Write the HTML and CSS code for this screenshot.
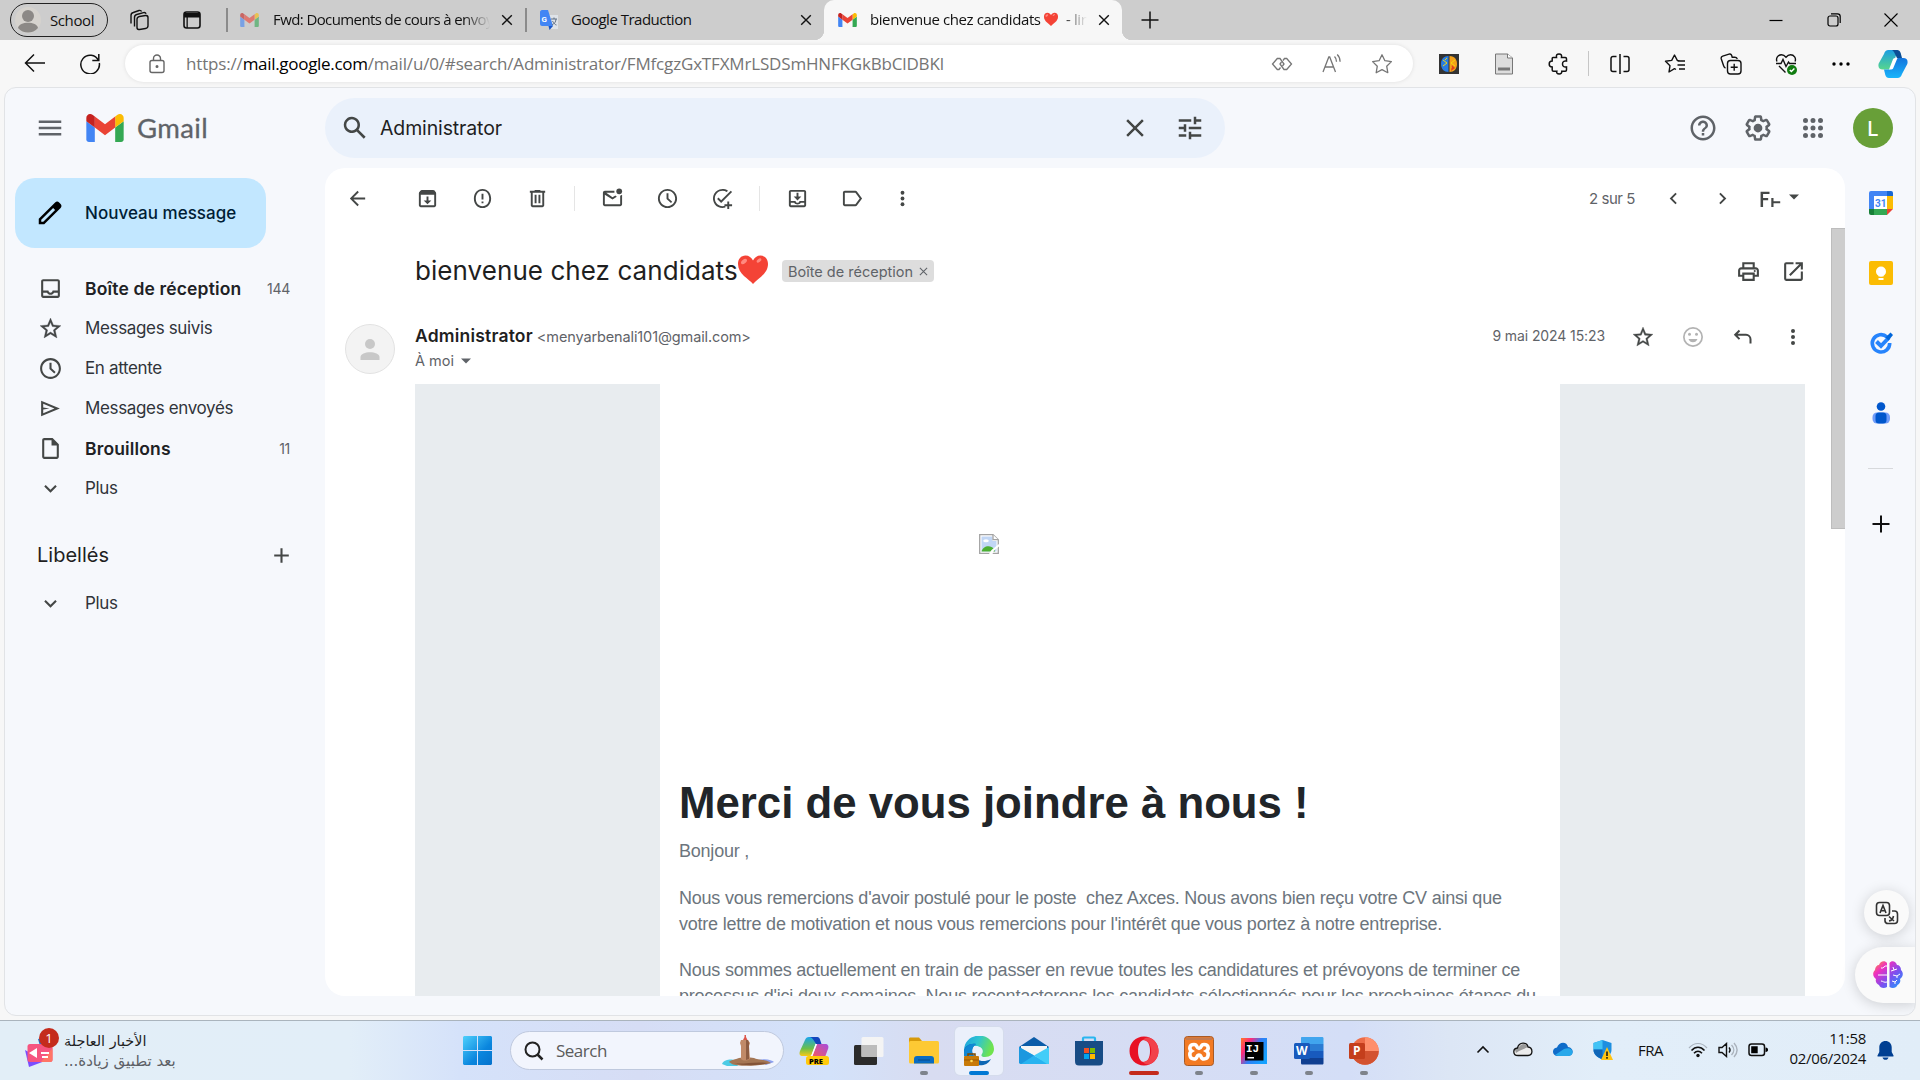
FILE: index.html
```html
<!DOCTYPE html>
<html lang="fr">
<head>
<meta charset="utf-8">
<title>bienvenue chez candidats - Gmail</title>
<link rel="stylesheet" href="styles.css">
</head>
<body>
<svg class="defs" width="0" height="0">
  <symbol id="gmail" viewBox="52 42 88 66"><path fill="#4285f4" d="M58 108h14V74L52 59v43c0 3.32 2.69 6 6 6"/><path fill="#34a853" d="M120 108h14c3.32 0 6-2.69 6-6V59l-20 15"/><path fill="#fbbc04" d="M120 48v26l20-15v-8c0-7.42-8.47-11.65-14.4-7.2"/><path fill="#ea4335" d="M72 74V48l24 18 24-18v26L96 92"/><path fill="#c5221f" d="M52 51v8l20 15V48l-5.6-4.2c-5.94-4.45-14.4-.22-14.4 7.2"/></symbol>
  <symbol id="close" viewBox="0 0 12 12"><path d="M1.2 1.2l9.6 9.6M10.8 1.2l-9.6 9.6" fill="none" stroke="currentColor" stroke-width="1.4"/></symbol>
  <symbol id="heart" viewBox="0 0 32 32"><path fill="#f44336" d="M16 30C12 25 1 20 1 10 1 5 4 1.500 8.500 1.500c3.500 0 6 2 7.500 5 1.500-3 4-5 7.500-5C28 1.500 31 5 31 10c0 10-11 15-15 20z"/><ellipse cx="7" cy="7.500" rx="3.400" ry="2" fill="#ff8a80" transform="rotate(-40 7 7.500)"/><ellipse cx="22" cy="6.500" rx="2.800" ry="1.500" fill="#ff8a80" transform="rotate(-35 22 6.500)"/></symbol>
  <symbol id="star" viewBox="0 0 24 24"><path d="M22 9.240l-7.190-.62L12 2 9.190 8.630 2 9.240l5.460 4.730L5.820 21 12 17.270 18.180 21l-1.630-7.030L22 9.240zM12 15.400l-3.760 2.270 1-4.280-3.320-2.880 4.380-.38L12 6.100l1.710 4.040 4.380.38-3.320 2.880 1 4.280L12 15.400z" stroke="currentColor" stroke-width=".3"/></symbol>
  <symbol id="clock" viewBox="0 0 24 24"><path d="M12 2C6.500 2 2 6.500 2 12s4.500 10 10 10 10-4.500 10-10S17.500 2 12 2zm0 18c-4.400 0-8-3.600-8-8s3.600-8 8-8 8 3.600 8 8-3.600 8-8 8zM13 6.500h-2v6l4.600 4.300 1.300-1.400-3.900-3.700z"/></symbol>
  <symbol id="dots" viewBox="0 0 24 24"><circle cx="12" cy="6" r="2"/><circle cx="12" cy="12" r="2"/><circle cx="12" cy="18" r="2"/></symbol>
  <symbol id="down" viewBox="0 0 24 24"><path d="M7.400 8.600L12 13.200l4.600-4.600L18 10l-6 6-6-6z"/></symbol>
</svg>

<header class="tabstrip">
  <div class="profile"><svg width="26" height="26" viewBox="0 0 26 26"><circle cx="13" cy="13" r="13" fill="#d6d3ce"/><circle cx="13" cy="9" r="6" fill="#8c8986"/><path d="M3 21c1-7 19-7 20 0-5 6-15 6-20 0z" fill="#8c8986"/></svg><span>School</span></div>
  <svg class="workspaces" width="22" height="22" viewBox="0 0 22 22" fill="none" stroke="#111" stroke-width="1.400"><rect x="9" y="7" width="11" height="13" rx="2.500" transform="skewY(-9) translate(0 2.300)"/><path d="M6.500 17.500V8.500c0-1.600.8-2.600 2.300-3L15.500 3.600c1.200-.3 2.200.2 2.600 1.200"/><path d="M3 14.500V6.500c0-1.600.8-2.600 2.300-3L11 1.500c1.200-.3 2.200.2 2.600 1"/></svg>
  <svg class="tabactions" width="20" height="20" viewBox="0 0 20 20"><rect x="2" y="2" width="16" height="16" rx="2.500" fill="none" stroke="#111" stroke-width="1.600"/><path d="M2 3h16v4.500H2zM4.500 7h1.300v11H4.500z" fill="#111"/></svg>
  <div class="tab tab-one"><svg class="fav faded" width="19" height="14"><use href="#gmail"/></svg><span class="title t1">Fwd: Documents de cours à envoyer</span><svg class="x" width="12" height="12"><use href="#close"/></svg></div>
  <div class="tab tab-two"><svg class="fav" width="19" height="20" viewBox="0 0 19 20"><path d="M7 5h11v14H11z" fill="#dfe3e8"/><path d="M0 2C0 1 1 0 2 0h6l5 16H2c-1 0-2-1-2-2z" fill="#4285f4"/><path d="M8.500 16h4.500l-3.500 4z" fill="#1a57c8"/><text x="1.500" y="11.500" class="g-letter">G</text><path d="M11 9h6M14 7.500V9M16 9c0 3-2 5-4 6M12.500 11c1 2 3 4 4 4" stroke="#5f6f84" stroke-width="1" fill="none"/></svg><span class="title t2">Google Traduction</span><svg class="x" width="12" height="12"><use href="#close"/></svg></div>
  <div class="tab active"><svg class="fav" width="19" height="14"><use href="#gmail"/></svg><span class="title t3">bienvenue chez candidats<svg class="tab-heart" width="16" height="15"><use href="#heart"/></svg> - linda</span><svg class="x" width="12" height="12"><use href="#close"/></svg></div>
  <svg class="newtab" width="18" height="18" viewBox="0 0 18 18"><path d="M9 .5v17M.5 9h17" stroke="#111" stroke-width="1.500"/></svg>
  <div class="winctl">
    <svg width="14" height="14" viewBox="0 0 14 14"><path d="M.5 7.500h13" stroke="#000" stroke-width="1.200"/></svg>
    <svg width="14" height="14" viewBox="0 0 14 14" fill="none" stroke="#000" stroke-width="1.200"><rect x="1" y="3" width="10" height="10" rx="2"/><path d="M4 .8h6.500c1.600 0 2.700 1 2.700 2.700V10"/></svg>
    <svg width="14" height="14" viewBox="0 0 14 14"><path d="M.5.5l13 13M13.500.5l-13 13" stroke="#000" stroke-width="1.100"/></svg>
  </div>
</header>

<nav class="toolbar">
  <svg class="nav-ic" width="22" height="20" viewBox="0 0 22 20" fill="none" stroke="#111" stroke-width="1.500"><path d="M10 1.500L1.500 10l8.500 8.500M1.500 10h19.500"/></svg>
  <svg class="nav-ic" width="22" height="22" viewBox="0 0 22 22" fill="none" stroke="#111" stroke-width="1.500"><path d="M19.500 8.500A9.300 9.300 0 1 0 20.300 11M19.800 2v6.500h-6.500"/></svg>
  <div class="address">
    <svg class="lock" width="18" height="20" viewBox="0 0 18 20" fill="none" stroke="#666" stroke-width="1.400"><rect x="2" y="6.500" width="14" height="12" rx="2"/><path d="M5.500 6.500V4.500a3.500 3.500 0 0 1 7 0v2"/><circle cx="9" cy="12.500" r=".8" fill="#444"/></svg>
    <span class="url">https://<b>mail.google.com</b>/mail/u/0/#search/Administrator/FMfcgzGxTFXMrLSDSmHNFKGkBbClDBKl</span>
    <div class="addr-icons">
      <svg width="22" height="22" viewBox="0 0 22 22" fill="none" stroke="#767676" stroke-width="1.300"><path d="M9.500 14.500L8 16.500H6.300L1.500 11l4.800-5.500H9L13 11l-1.500 2"/><path d="M12 7.500l1.500-2h2.200l4.800 5.500-4.800 5.500H13L9 11l1.500-2"/></svg>
      <svg width="22" height="22" viewBox="0 0 22 22" fill="none" stroke="#767676" stroke-width="1.300"><path d="M2 19L7.800 4h.9L14.500 19M4 14h8.500M13.500 3.500c1.400 1.300 2 3 2 5.200M16.200 1.500c2 1.900 2.900 4.300 2.900 7.200"/></svg>
      <svg width="22" height="22" viewBox="0 0 22 22" fill="none" stroke="#767676" stroke-width="1.300"><path d="M11 1.800l2.900 5.900 6.500.9-4.700 4.600 1.100 6.500-5.800-3.100-5.800 3.100 1.100-6.500L1.600 8.600l6.500-.9z" stroke-linejoin="round"/></svg>
    </div>
  </div>
  <div class="tools">
    <svg width="22" height="22" viewBox="0 0 22 22"><path fill="#333" d="M1 1h20v20H1z"/><path d="M10.500 3C5 3 3 7 3 11c0 5 3 8 7.500 8z" fill="#2a7de1"/><path d="M11.500 3C17 3 19 7 19 11c0 5-3 8-7.500 8z" fill="#f3a11a"/><path d="M5 7l4 3-4 3M9 5l-2 2M17 7l-4 3 4 3M13 14l2 2" stroke="#f5d90a" fill="none"/><path d="M14 12l3 3-4 3z" fill="#e0401d"/></svg>
    <svg width="22" height="22" viewBox="0 0 22 22"><path d="M2.500 1h12l5 4v16h-17z" fill="#ddd" stroke="#777"/><path d="M14.500 1v4h5" fill="#fff" stroke="#777"/><path d="M5 14.500h12v3H5z" fill="#777"/></svg>
    <svg width="22" height="22" viewBox="0 0 22 22" fill="none" stroke="#111" stroke-width="1.500"><path d="M5 4.500h3.500C8 2 9 1 11 1s3 1 2.500 3.500h3.800c.7 0 1.200.5 1.200 1.200V8c-2.500-.5-4 .8-4 3s1.500 3.500 4 3v3c0 .7-.5 1.200-1.200 1.200h-3.500C14 20 13 21 11.200 21c-1.900 0-3-1-2.400-2.800H5.500c-.8 0-1.300-.5-1.300-1.200v-3C2 14 1.200 12.800 1.200 11S2 8 4.200 8V5.500c0-.6.300-1 .8-1z"/></svg>
    <i class="tools-sep"></i>
    <svg width="22" height="22" viewBox="0 0 22 22" fill="none" stroke="#111" stroke-width="1.500"><path d="M11 1v20M7.500 3.500H4A2 2 0 0 0 2 5.500v11a2 2 0 0 0 2 2h3.500M14.500 3.500H18a2 2 0 0 1 2 2v11a2 2 0 0 1-2 2h-3.500"/></svg>
    <svg width="22" height="22" viewBox="0 0 22 22" fill="none" stroke="#111" stroke-width="1.400"><path d="M12 16.500l-1.500-.8L5 19l1-6.300L1.500 8.300l6.200-.9L10.500 2l2.800 5.400 2 .3M13.500 8h7.500M13.500 12h7.500M15 16h6" stroke-linejoin="round"/></svg>
    <svg width="22" height="22" viewBox="0 0 22 22" fill="none" stroke="#111" stroke-width="1.400"><rect x="7.500" y="7.500" width="13.500" height="13.500" rx="3"/><path d="M14.200 10.800v7M10.700 14.300h7M5.500 15c-1-.3-1.500-1-1.800-2L1.300 6c-.4-1.300.2-2.400 1.400-2.800L9 1.200c1.200-.4 2.300.1 2.700 1.300l.5 1.800h2.600c1.200 0 2 .5 2.600 1.500"/></svg>
    <svg width="22" height="22" viewBox="0 0 22 22" fill="none" stroke="#111" stroke-width="1.400"><path d="M2 8.500C.5 5 3 1.800 6.500 1.800c2 0 3.300 1 4.500 2.400 1.200-1.400 2.500-2.400 4.500-2.400C19 1.800 21.500 5 20 8.500M1 10.500h5l2-4 3 7 2.500-4.500 1 1.500H21M4 13l6.500 6.500"/><circle cx="17" cy="17" r="5" fill="#107c10" stroke="none"/><path d="M14.800 17l1.600 1.600 3-3" stroke="#fff"/></svg>
    <svg width="22" height="22" viewBox="0 0 22 22"><circle cx="4" cy="11" r="1.700"/><circle cx="11" cy="11" r="1.700"/><circle cx="18" cy="11" r="1.700"/></svg>
    <svg class="copilot" width="30" height="28" viewBox="0 0 30 28"><defs><linearGradient id="cp1" x1="0" y1="0" x2="0" y2="1"><stop offset="0" stop-color="#1b9de2"/><stop offset="1" stop-color="#57d68d"/></linearGradient><linearGradient id="cp2" x1="0" y1="0" x2="0" y2="1"><stop offset="0" stop-color="#1374dd"/><stop offset="1" stop-color="#19b5fb"/></linearGradient></defs><path d="M6 4c.8-2.500 2.200-4 4.500-4H20l-5 14c-1 3.500-2 5.500-5 5.500H5c-4 0-5.200-2.500-4.300-6z" fill="url(#cp1)"/><path d="M14 0h5c2 0 3 1 3.700 3L24 8h-5l-2-4c-.7-2-1.500-3-3-4z" fill="#0b4e96"/><path d="M24 24c-.8 2.500-2.200 4-4.500 4H11c-2 0-3-1-3.700-3L6 19.500h4.500c2 0 3-1 3.500-3l2-5.500c1-2 2-3 4-3H25c4 0 5.200 2.500 4.300 6z" fill="url(#cp2)"/><path d="M19.500 8H17c-1.200 0-2 .8-2.300 2l-3.700 9.500h2.200c1.200 0 2-.8 2.300-2z" fill="#fff"/></svg>
  </div>
</nav>

<main class="viewport">
<div class="page">
  <header class="ghead">
    <div class="brand">
      <svg width="30" height="30" viewBox="0 0 24 24" fill="#5f6368"><path d="M3 18h18v-2H3v2zm0-5h18v-2H3v2zm0-7v2h18V6H3z"/></svg>
      <svg class="glogo" width="38" height="28"><use href="#gmail"/></svg>
      <span class="gword">Gmail</span>
    </div>
    <div class="search">
      <svg width="30" height="30" viewBox="0 0 24 24"><path d="M20.500 19l-5.700-5.700A6.500 6.500 0 1 0 13.300 14.800L19 20.500zM9.500 14A4.500 4.500 0 1 1 14 9.500 4.500 4.500 0 0 1 9.500 14z"/></svg>
      <span>Administrator</span>
      <svg width="30" height="30" viewBox="0 0 24 24"><path d="M19 6.400L17.600 5 12 10.600 6.400 5 5 6.400l5.600 5.600L5 17.600 6.400 19l5.600-5.600 5.600 5.600 1.400-1.400-5.600-5.600z"/></svg>
      <svg width="30" height="30" viewBox="0 0 24 24"><path d="M3 17v2h6v-2H3zM3 5v2h10V5H3zm10 16v-2h8v-2h-8v-2h-2v6h2zM7 9v2H3v2h4v2h2V9H7zm14 4v-2H11v2h10zm-6-4h2V7h4V5h-4V3h-2v6z"/></svg>
    </div>
    <div class="ghead-right">
      <svg width="30" height="30" viewBox="0 0 24 24"><path d="M11 18h2v-2h-2v2zm1-16C6.480 2 2 6.480 2 12s4.480 10 10 10 10-4.480 10-10S17.520 2 12 2zm0 18c-4.410 0-8-3.590-8-8s3.590-8 8-8 8 3.590 8 8-3.590 8-8 8zm0-14c-2.210 0-4 1.790-4 4h2c0-1.100.9-2 2-2s2 .9 2 2c0 2-3 1.750-3 5h2c0-2.250 3-2.500 3-5 0-2.210-1.790-4-4-4z"/></svg>
      <svg width="30" height="30" viewBox="0 0 24 24"><path d="M13.850 22.250h-3.700c-.74 0-1.360-.54-1.450-1.270l-.27-1.890c-.27-.14-.53-.29-.79-.46l-1.800.72c-.7.26-1.470-.03-1.810-.65L2.200 15.530c-.35-.66-.2-1.440.36-1.880l1.530-1.190c-.01-.15-.02-.3-.02-.46 0-.15.010-.31.020-.46l-1.520-1.190c-.59-.45-.74-1.260-.37-1.880l1.850-3.190c.34-.62 1.110-.9 1.790-.63l1.810.73c.26-.17.52-.32.78-.46l.27-1.910c.09-.7.71-1.250 1.440-1.250h3.700c.74 0 1.360.54 1.450 1.270l.27 1.890c.27.14.53.29.79.46l1.800-.72c.71-.26 1.480.03 1.820.65l1.840 3.180c.36.66.2 1.440-.36 1.880l-1.520 1.190c.01.15.02.3.02.46s-.01.31-.02.46l1.520 1.190c.56.45.72 1.230.37 1.860l-1.860 3.220c-.34.62-1.110.9-1.800.63l-1.800-.72c-.26.17-.52.32-.78.46l-.27 1.910c-.1.680-.72 1.220-1.460 1.220zm-3.230-2h2.760l.37-2.550.53-.22c.44-.18.88-.44 1.340-.78l.45-.34 2.380.96 1.380-2.400-2.030-1.580.07-.56c.03-.26.060-.51.060-.78s-.03-.53-.06-.78l-.07-.56 2.030-1.580-1.390-2.400-2.390.96-.45-.35c-.42-.32-.87-.58-1.330-.77l-.52-.22-.37-2.550h-2.760l-.37 2.550-.53.210c-.44.190-.88.440-1.340.79l-.45.330-2.380-.95-1.390 2.390 2.030 1.580-.07.56a7 7 0 0 0-.06.790c0 .26.020.53.060.78l.07.56-2.030 1.580 1.380 2.400 2.390-.96.45.350c.43.330.86.580 1.330.77l.53.220z"/><circle cx="12" cy="12" r="3.500"/></svg>
      <svg width="30" height="30" viewBox="0 0 24 24"><path d="M6 8a2 2 0 1 0 0-4 2 2 0 0 0 0 4zM12 8a2 2 0 1 0 0-4 2 2 0 0 0 0 4zM18 8a2 2 0 1 0 0-4 2 2 0 0 0 0 4zM6 14a2 2 0 1 0 0-4 2 2 0 0 0 0 4zM12 14a2 2 0 1 0 0-4 2 2 0 0 0 0 4zM18 14a2 2 0 1 0 0-4 2 2 0 0 0 0 4zM6 20a2 2 0 1 0 0-4 2 2 0 0 0 0 4zM12 20a2 2 0 1 0 0-4 2 2 0 0 0 0 4zM18 20a2 2 0 1 0 0-4 2 2 0 0 0 0 4z"/></svg>
      <span class="me">L</span>
    </div>
  </header>

  <aside class="side">
    <div class="compose"><svg width="30" height="30" viewBox="0 0 24 24"><path d="M20.500 4.700l-1.200-1.200c-.9-.9-2.300-.9-3.200 0L3 16.600V21h4.400L20.500 7.900c.9-.9.900-2.300 0-3.200zM6.600 19H5v-1.600L14.500 8l1.600 1.600z"/></svg><span>Nouveau message</span></div>
    <ul class="nav">
      <li class="strong"><svg viewBox="0 0 24 24"><path d="M19 3H5c-1.100 0-2 .9-2 2v14c0 1.100.9 2 2 2h14c1.100 0 2-.9 2-2V5c0-1.100-.9-2-2-2zm0 16H5v-3h3.560c.69 1.190 1.970 2 3.450 2s2.750-.81 3.450-2H19v3zm0-5h-4.990c0 1.100-.9 2-2 2s-2-.9-2-2H5V5h14v9z"/></svg><span>Boîte de réception</span><em>144</em></li>
      <li><svg><use href="#star"/></svg><span>Messages suivis</span></li>
      <li><svg><use href="#clock"/></svg><span>En attente</span></li>
      <li><svg viewBox="0 0 24 24"><path d="M3 4.500v15L21 12 3 4.500zM5 7.500L15.800 12 5 16.500V13l6-1-6-1z"/></svg><span>Messages envoyés</span></li>
      <li class="strong"><svg viewBox="0 0 24 24"><path d="M14 2H6c-1.100 0-2 .9-2 2v16c0 1.100.9 2 2 2h12c1.100 0 2-.9 2-2V8l-6-6zm4 18H6V4h7v5h5v11z"/></svg><span>Brouillons</span><em>11</em></li>
      <li><svg><use href="#down"/></svg><span>Plus</span></li>
    </ul>
    <div class="labels"><span>Libellés</span><svg width="25" height="25" viewBox="0 0 24 24"><path d="M19 13h-6v6h-2v-6H5v-2h6V5h2v6h6z"/></svg></div>
    <ul class="nav"><li><svg><use href="#down"/></svg><span>Plus</span></li></ul>
  </aside>

  <section class="mail">
    <div class="actions">
      <svg class="back" viewBox="0 0 24 24"><path d="M20 11H7.800l5.600-5.600L12 4l-8 8 8 8 1.400-1.400L7.800 13H20z"/></svg>
      <svg viewBox="0 0 24 24"><path d="M20.500 5.200l-1.400-1.700C18.900 3.200 18.500 3 18 3H6c-.5 0-.9.200-1.100.6L3.500 5.200C3.200 5.600 3 6 3 6.500V19c0 1.100.9 2 2 2h14c1.100 0 2-.9 2-2V6.500c0-.5-.2-.9-.5-1.300zM19 19H5V8h14v11zm-8-9v4H8l4 4 4-4h-3v-4z"/></svg>
      <svg viewBox="0 0 24 24"><path d="M12 2C6.500 2 3 6.500 3 12s3.500 10 9 10 9-4.500 9-10-3.500-10-9-10zm0 18c-4.400 0-7-3.600-7-8s2.600-8 7-8 7 3.600 7 8-2.600 8-7 8zM11 7h2v6h-2zm0 8h2v2h-2z"/></svg>
      <svg viewBox="0 0 24 24"><path d="M15 4V3H9v1H4v2h1v13c0 1.100.9 2 2 2h10c1.100 0 2-.9 2-2V6h1V4h-5zm2 15H7V6h10v13zM9 8h2v9H9zm4 0h2v9h-2z"/></svg>
      <i></i>
      <svg viewBox="0 0 24 24"><path d="M20 9v9H4V8l8 5 4.500-2.800-1.500-1.400-3 2L5.500 6H14V4H4c-1.100 0-2 .9-2 2v12c0 1.100.9 2 2 2h16c1.100 0 2-.9 2-2V8z"/><circle cx="19" cy="4.500" r="3"/></svg>
      <svg><use href="#clock"/></svg>
      <svg viewBox="0 0 24 24"><path d="M22 5.200L10.600 16.600l-4.200-4.200 1.400-1.400 2.800 2.800L20.600 3.800zM12 20c-4.400 0-8-3.600-8-8s3.600-8 8-8c1.600 0 3 .5 4.300 1.300l1.500-1.500A10 10 0 1 0 12 22c1 0 2-.2 3-.5v-2.100c-.9.400-1.900.6-3 .6zm7-5h-2v3h-3v2h3v3h2v-3h3v-2h-3z"/></svg>
      <i></i>
      <svg viewBox="0 0 24 24"><path d="M19 3H5c-1.100 0-2 .9-2 2v14c0 1.100.9 2 2 2h14c1.100 0 2-.9 2-2V5c0-1.100-.9-2-2-2zm0 16H5v-2.500h3.500c.7 1.100 2 1.800 3.500 1.800s2.800-.7 3.500-1.800H19zm0-4.500h-5c0 1.100-.9 2-2 2s-2-.9-2-2H5V5h14zM16 10h-3V6h-2v4H8l4 4z"/></svg>
      <svg viewBox="0 0 24 24"><path d="M15 4H4c-1.100 0-2 .9-2 2v12c0 1.100.9 2 2 2h11c.7 0 1.300-.3 1.600-.8L22 12l-5.400-7.200C16.300 4.300 15.700 4 15 4zm0 14H4V6h11l4.500 6z"/></svg>
      <svg class="more"><use href="#dots"/></svg>
      <span class="count">2 sur 5</span>
      <svg viewBox="0 0 24 24"><path d="M15.400 7.400L14 6l-6 6 6 6 1.400-1.400L10.800 12z"/></svg>
      <svg viewBox="0 0 24 24"><path d="M10 6L8.600 7.400l4.600 4.600-4.600 4.600L10 18l6-6z"/></svg>
      <svg class="lang" viewBox="0 0 28 22"><path d="M4 4h10v2.500H6.800V11h5.700v2.500H6.800V21H4zM16 11h2.500v3.500H26V17h-7.500v4H16z"/></svg>
      <svg class="caret" viewBox="0 0 24 24"><path d="M6 9l6 6 6-6z"/></svg>
    </div>

    <div class="scroll">
      <div class="subject">
        <h1>bienvenue chez candidats</h1><svg width="32" height="32"><use href="#heart"/></svg>
        <span class="chip"><span>Boîte de réception</span><svg width="9" height="9"><use href="#close"/></svg></span>
        <svg class="print" width="25" height="25" viewBox="0 0 24 24"><path d="M19 8h-1V3H6v5H5c-1.660 0-3 1.340-3 3v6h4v4h12v-4h4v-6c0-1.660-1.340-3-3-3zM8 5h8v3H8V5zm8 14H8v-4h8v4zm2-4v-2H6v2H4v-4c0-.55.450-1 1-1h14c.55 0 1 .45 1 1v4h-2z"/><circle cx="18" cy="11.500" r="1"/></svg>
        <svg width="25" height="25" viewBox="0 0 24 24"><path d="M19 19H5V5h7V3H5a2 2 0 0 0-2 2v14a2 2 0 0 0 2 2h14c1.100 0 2-.9 2-2v-7h-2v7zM14 3v2h3.590l-9.830 9.830 1.410 1.410L19 6.410V10h2V3h-7z"/></svg>
      </div>
      <div class="from">
        <svg class="ava" width="50" height="50" viewBox="0 0 50 50"><circle cx="25" cy="25" r="24.500" fill="#f3f3f3" stroke="#e2e2e2"/><circle cx="25" cy="20" r="5" fill="#c8c8c8"/><path d="M15.500 36v-3c0-6.500 19-6.500 19 0v3z" fill="#c8c8c8"/></svg>
        <div class="who"><p><b>Administrator</b> <span>&lt;menyarbenali101@gmail.com&gt;</span></p><p class="to"><span>À moi</span><svg width="20" height="20" viewBox="0 0 24 24"><path d="M6 9l6 6 6-6z"/></svg></p></div>
        <span class="date">9 mai 2024 15:23</span>
        <div class="from-ic">
          <svg><use href="#star"/></svg>
          <svg class="dim" viewBox="0 0 24 24"><path d="M12 2a10 10 0 1 0 0 20 10 10 0 0 0 0-20zm0 18.300A8.300 8.300 0 1 1 12 3.700a8.300 8.300 0 0 1 0 16.600zM7.500 14h9c-.7 2-2.400 3.300-4.500 3.300S8.200 16 7.500 14z"/><circle cx="8.500" cy="9.300" r="1.500"/><circle cx="15.500" cy="9.300" r="1.500"/></svg>
          <svg viewBox="0 0 24 24" fill="none" stroke="currentColor" stroke-width="2"><path class="hollow" d="M8.500 5.500L4.200 9.800l4.300 4.300M4.200 9.800H15a4.500 4.500 0 0 1 4.500 4.500v4.200"/></svg>
          <svg><use href="#dots"/></svg>
        </div>
      </div>
      <article class="letter">
        <div class="sheet">
          <svg class="missing" width="20" height="20" viewBox="0 0 20 20"><path d="M.7.700h13.300l5.300 5v13.600H.7z" fill="#fff" stroke="#a3a3a3" stroke-width="1.300"/><path d="M2.500 2.500h11v4.500h4v10.500h-15z" fill="#c1d6f5"/><ellipse cx="7" cy="6.700" rx="2.800" ry="1.500" fill="#fff"/><path d="M2.500 17.500c1-5.500 9-7.500 12.500-2.500l1 2.500z" fill="#4caf32"/><path d="M14 .7v5h5.300" fill="#fff" stroke="#a3a3a3" stroke-width="1.300"/><path d="M10 20l2.500-4L20 10v2.500l-5 4-1.500 3.500z" fill="#fff"/></svg>
          <h2>Merci de vous joindre à nous !</h2>
          <p>Bonjour ,</p>
          <p>Nous vous remercions d'avoir postulé pour le poste&nbsp; chez Axces. Nous avons bien reçu votre CV ainsi que<br>votre lettre de motivation et nous vous remercions pour l'intérêt que vous portez à notre entreprise.</p>
          <p>Nous sommes actuellement en train de passer en revue toutes les candidatures et prévoyons de terminer ce<br>processus d'ici deux semaines. Nous recontacterons les candidats sélectionnés pour les prochaines étapes du</p>
        </div>
      </article>
      <div class="thumb"></div>
    </div>
  </section>

  <aside class="apps">
    <svg width="24" height="24" viewBox="0 0 24 24"><path d="M2 0h16v5H5v13H0V2a2 2 0 0 1 2-2z" fill="#4285f4"/><path d="M18 0h4a2 2 0 0 1 2 2v4h-6z" fill="#1967d2"/><path d="M18 5h6v13h-6z" fill="#fbbc04"/><path d="M5 18h13v6H5z" fill="#34a853"/><path d="M0 18h5v6H2a2 2 0 0 1-2-2z" fill="#188038"/><path d="M18 18h6l-6 6z" fill="#ea4335"/><path d="M5 5h13v13H5z" fill="#fff"/><text x="6" y="15.500" class="cal">31</text></svg>
    <svg width="24" height="24" viewBox="0 0 24 24"><rect width="24" height="24" rx="2" fill="#fbbc04"/><circle cx="12" cy="10.500" r="5" fill="#fff"/><path d="M9.500 13h5v2.500h-5zM9.500 17h5v2h-5z" fill="#fff"/></svg>
    <svg width="24" height="24" viewBox="0 0 24 24"><path d="M18 6A8.700 8.700 0 1 0 20.700 12" fill="none" stroke="#2684fc" stroke-width="3.600"/><path d="M7.500 10.500l4.500 4.500L20 6.500" fill="none" stroke="#2684fc" stroke-width="4"/><path d="M16.500 6.500L21.500 1.500 24 4l-4.500 5.500z" fill="#0066da"/></svg>
    <svg width="24" height="24" viewBox="0 0 24 24"><rect x="3.500" y="11.500" width="17.500" height="11" rx="4.500" fill="#6f9cf9"/><rect x="6.500" y="11.500" width="11" height="11" rx="3.500" fill="#0057cc"/><circle cx="12" cy="5.500" r="4.300" fill="#0057cc"/></svg>
    <i></i>
    <svg width="24" height="24" viewBox="0 0 24 24"><path d="M12 3.500v17M3.500 12h17" stroke="#111" stroke-width="2"/></svg>
  </aside>
</div>
<div class="float translate"><svg width="24" height="24" viewBox="0 0 24 24" fill="none" stroke="#333" stroke-width="1.600"><rect x="1.500" y="1.500" width="13" height="13" rx="3"/><path d="M5 12l3-7.500L11 12M6 9.800h4M17 10h2.500a3 3 0 0 1 3 3v6.500a3 3 0 0 1-3 3H13a3 3 0 0 1-3-2.500V17M14 20c3-.5 4-2 4.500-5M14 15.500l5 4.500"/></svg></div>
<div class="float brain"><svg width="30" height="28" viewBox="0 0 30 28"><defs><linearGradient id="br" x1="0" y1="0" x2="1" y2="1"><stop offset="0" stop-color="#ff9d2e"/><stop offset=".28" stop-color="#ee2fc0"/><stop offset=".6" stop-color="#7a50f0"/><stop offset="1" stop-color="#14a5ff"/></linearGradient></defs><path d="M14 2v24c-3 2-7 1-8-2-2-1-4-3-3-6-3-2-4-6-1-9C2 6 4 4 6 4c1-4 6-5 8-2zM16.500 2v24c3 2 7 1 8-2 2-1 3.500-3 2.500-6 3-2 4-6 1-9 0-3-1.500-5-4-5-1-4-5.500-5-7.500-2z" fill="url(#br)"/><path d="M14 5c-3-1-3 3-6 2M14 14H5M14 21c-3 1-4-1-6-1M20 6l1 3 3-1M21 9l-3 1M20 14l4 1 3-2M24 15v2M19 20l3 1 2-2M22 21v2" stroke="#fff" fill="none"/></svg></div>
</main>

<footer class="taskbar">
  <div class="news">
    <svg width="30" height="32" viewBox="0 0 30 32"><path d="M13 4l8-2 4 12-8 4z" fill="#1976d2"/><path d="M0 15l20 11-16 6z" fill="#7b4dff"/><rect x="2.500" y="9" width="25" height="18" rx="2.500" fill="#f65480"/><path d="M16 27h9c2 0 2.500-1 2.500-2.500V13z" fill="#ff7566"/><path d="M4 18l8-5v10zM16 17h8v2h-8zM17 21h6v2h-6z" fill="#fff"/></svg>
    <span class="badge">1</span>
    <div class="news-text" lang="ar"><p class="n1" dir="rtl">الأخبار العاجلة</p><p class="n2" dir="rtl">بعد تطبيق زيادة...</p></div>
  </div>
  <svg class="start" width="29" height="29" viewBox="0 0 29 29"><defs><linearGradient id="wn" x1="0" y1="0" x2="1" y2="1"><stop offset="0" stop-color="#4fd0fc"/><stop offset=".6" stop-color="#0a86de"/><stop offset="1" stop-color="#0572cc"/></linearGradient></defs><path d="M1 0h13v14H0V1zM15 0h13l1 1v13H15zM0 15h14v14H1l-1-1zM15 15h14v13l-1 1H15z" fill="url(#wn)"/></svg>
  <div class="tsearch"><svg width="20" height="20" viewBox="0 0 20 20" fill="none" stroke="#222" stroke-width="2"><circle cx="8.500" cy="8.500" r="7"/><path d="M13.500 13.500l5 5" stroke-width="2.500"/></svg><span>Search</span>
    <svg class="tower" width="52" height="32" viewBox="0 0 52 32"><path d="M0 29c2-5 10-5 12-4l4 6H5z" fill="#4ccbe5"/><path d="M36 25c8-2 14 0 16 2l-8 3z" fill="#8ca0ee"/><path d="M7 27c3-3 6-2 10-4 4-1 10-1 15 0 3 2 12 1 17 5-9 3-33 4-39 1z" fill="#a47654"/><path d="M12 28c8 2 20-2 34 0-8 3-26 3-34 0z" fill="#835438"/><path d="M18 8l1-3h7l2 3-1 3 1 13c-3 2-7 2-9 0V11z" fill="#c08a68"/><path d="M24 5h2l1 3v16l-3 1z" fill="#8d5d42"/><path d="M21 5l1.500-3V0H24v2l1.500 3z" fill="#dc554a"/></svg>
  </div>
  <div class="pins">
    <div class="pin"><svg width="30" height="30" viewBox="0 0 30 30"><defs><linearGradient id="c3" x1="0" y1="0" x2="0" y2="1"><stop offset="0" stop-color="#18a4ef"/><stop offset=".6" stop-color="#6abf4b"/><stop offset="1" stop-color="#f8c916"/></linearGradient><linearGradient id="c4" x1="0" y1="1" x2="1" y2="0"><stop offset="0" stop-color="#f65a5c"/><stop offset="1" stop-color="#a54be0"/></linearGradient></defs><path d="M6 4c.8-2 2-3 4-3h9l-6 17c-.6 1.500-1.500 2-3 2H4c-3.500 0-4-2-3-5z" fill="url(#c3)"/><path d="M11 1h7c2 0 2.500 1 3 2.500L22.500 8H17c-2-3-3-6-6-7z" fill="#1245bd"/><path d="M18 8h8c3 0 4 2 3 5l-3 8H13z" fill="url(#c4)"/><path d="M18 8l-4.500 12H12l4.500-12z" fill="#fff"/><rect x="7" y="20" width="23" height="9" rx="2.500" fill="#ffca0a"/><text x="10" y="27.500" class="pre">PRE</text></svg></div>
    <div class="pin"><svg width="30" height="30" viewBox="0 0 30 30"><rect y="9" width="23" height="20" rx="1.500" fill="#2b2b2b"/><rect x="7.500" y="1" width="22" height="20" rx="1.500" fill="#f4f4f4"/><path d="M7.500 9H23v12H7.500z" fill="#bcbcbc"/></svg></div>
    <div class="pin"><svg width="30" height="30" viewBox="0 0 30 30"><path d="M0 3c0-1 .6-1.500 1.500-1.500H10L13 5v4H0z" fill="#d79a0a"/><rect y="5" width="30" height="22.500" rx="1.500" fill="#fdc934"/><path d="M5 27.500V23c0-2 1-3 3-3h14c2 0 3 1 3 3v4.500z" fill="#0a6cc2"/><path d="M9 24h12" stroke="#064a87"/></svg><b></b></div>
    <div class="pin current"><svg width="30" height="30" viewBox="0 0 30 30"><defs><linearGradient id="ed" x1="0" y1="0" x2="1" y2=".3"><stop offset="0" stop-color="#1b9fe0"/><stop offset=".5" stop-color="#2fc4d0"/><stop offset="1" stop-color="#6fe34e"/></linearGradient></defs><path d="M0 14C1-5 29-5 30 13c0 5-4 8-9 8-4 0-4-2-3-3 2-4-1-8-6-8C7 10 2 12 0 18z" fill="url(#ed)"/><path d="M0 16c0-6 6-9 12-8-3 2-5 6-3 10 3 7 10 9 18 5-3 6-9 7-14 6C5 28 0 23 0 16z" fill="#0c66b4"/><path d="M0 16c1-6 6-9 12-8-4 3-5 7-3 12H0z" fill="#1187d4"/><circle cx="15" cy="15" r="3.500" fill="#ebf0fb"/><rect y="20" width="15" height="10" rx="1" fill="#c87a08"/><path d="M4 20v-2h7v2" stroke="#7d4a00" stroke-width="1.500" fill="none"/><path d="M0 24h15" stroke="#9a5900"/><circle cx="7.500" cy="25" r="1.300" fill="#ffdb58"/></svg><b class="blue"></b></div>
    <div class="pin"><svg width="30" height="30" viewBox="0 0 30 30"><path d="M0 11L15 1l15 10v8H0z" fill="#0b5ca8"/><path d="M2 10h26v7L15 22 2 17z" fill="#f5f5f5"/><path d="M0 11l30 17H1.500L0 27z" fill="#28b3f0"/><path d="M30 11v17H28L15 19.500z" fill="#42cdf8"/><path d="M0 11l15 8.500L2 28l-2-1z" fill="#1b98df"/></svg></div>
    <div class="pin"><svg width="30" height="30" viewBox="0 0 30 30"><path d="M9 6V2.500C9 2 9.500 1.500 10 1.500h10c.6 0 1 .4 1 1V6" fill="none" stroke="#29b6f0" stroke-width="2.200"/><path d="M1 5h28v20c0 3-1 4.500-4 4.500H5c-3 0-4-1.500-4-4.500z" fill="#184c85"/><path d="M10 12h5v5h-5z" fill="#f25022"/><path d="M16 12h5v5h-5z" fill="#7fba00"/><path d="M10 18h5v5h-5z" fill="#00a4ef"/><path d="M16 18h5v5h-5z" fill="#ffb900"/></svg></div>
    <div class="pin"><svg width="30" height="30" viewBox="0 0 30 30"><path d="M15 .5C6.500.5.500 7 .500 15S6.500 29.500 15 29.500 29.500 23 29.500 15 23.500.500 15 .500zM15 4c4 0 6 5 6 11s-2 11-6 11-6-5-6-11S11 4 15 4z" fill="#e81224" fill-rule="evenodd"/><path d="M20 1.500c6 2 9.500 7.500 9.500 13.500S26 26.500 20 28.500c-3 .3-5-1-6-2.500 11-1 11-21 0-22 1-1.500 3-3 6-2.500z" fill="#f2414b"/></svg><b class="red"></b></div>
    <div class="pin"><svg width="30" height="30" viewBox="0 0 30 30"><rect x=".5" y=".5" width="29" height="29" rx="3" fill="#f37a23" stroke="#a85a25"/><path d="M2 1.500h26V4H2z" fill="#c47a4e"/><path d="M10 8.500c4 0 2 4 5 4s1-4 5-4c5 0 5 5 2.500 6.500C25 16.500 25 23 20 23c-4 0-2-4-5-4s-1 4-5 4c-5 0-5-6.500-2.500-8C5 13.500 5 8.500 10 8.500z" fill="none" stroke="#fff" stroke-width="3.600"/></svg><b></b></div>
    <div class="pin"><svg width="26" height="26" viewBox="0 0 26 26"><defs><linearGradient id="ij" x1="0" y1="0" x2="1" y2=".6"><stop offset="0" stop-color="#ff7a26"/><stop offset=".3" stop-color="#fd2a7b"/><stop offset=".6" stop-color="#2f7ef5"/><stop offset="1" stop-color="#15a1ff"/></linearGradient></defs><path d="M0 0h26v26H0z" fill="url(#ij)"/><path d="M4 4h18.500v18.500H4z"/><path d="M6.500 19h6.500v1.500H6.500z" fill="#fff"/><text x="5" y="13.500" class="ij">IJ</text></svg><b></b></div>
    <div class="pin"><svg width="30" height="30" viewBox="0 0 30 30"><path d="M8 1h20c1 0 1.500.5 1.500 1.500V8H7V2c0-.6.4-1 1-1z" fill="#41a5ee"/><path d="M7 8h22.500v7H7z" fill="#2b7cd3"/><path d="M7 15h22.500v7H7z" fill="#185abd"/><path d="M7 22h22.500v5c0 1-.5 1.500-1.500 1.500H8.500C7.500 28.500 7 28 7 27z" fill="#103f91"/><rect y="7" width="16" height="16" rx="1.500" fill="#185abd"/><text x="2" y="19" class="office">W</text></svg><b></b></div>
    <div class="pin"><svg width="30" height="30" viewBox="0 0 30 30"><circle cx="16" cy="15" r="13.700" fill="#ed6c47"/><path d="M16 1.300A13.700 13.700 0 0 1 29.700 15H16z" fill="#ff8f6b"/><path d="M2.300 15h27.400a13.700 13.700 0 0 1-27.400 0z" fill="#d35230"/><rect y="7" width="16" height="16" rx="1.500" fill="#c43e1c"/><text x="4" y="19" class="office">P</text></svg><b></b></div>
  </div>
  <div class="tray">
    <svg width="14" height="14" viewBox="0 0 14 14"><path d="M1.500 9.500L7 4l5.500 5.500" fill="none" stroke="#111" stroke-width="1.600"/></svg>
    <svg width="20" height="15" viewBox="0 0 20 15"><path d="M5 13.500c-5.500 0-5.500-7-.5-7.500C6-.500 14-.200 15 5c5 .5 5.500 8.500 0 8.500z" fill="#ececec"/><path d="M2 8c2-3 3-2 4-3 3-5 8-3 9 0l-9 4-3 2z" fill="#999"/><path d="M5 13.500c-5.500 0-5.500-7-.5-7.500C6-.500 14-.200 15 5c5 .5 5.500 8.500 0 8.500z" fill="none" stroke="#111" stroke-width="1.300"/></svg>
    <svg width="20" height="15" viewBox="0 0 20 15"><path d="M5 14C-1.500 14-1.500 6 4 5.500 6-.8 14-.8 15 5c6 .4 6.500 9 0 9z" fill="#0f6cc9"/><path d="M2 13l9-6c5-2 9 0 8.500 4-.5 2-2 3-4.500 3H5z" fill="#28a8ea"/></svg>
    <svg width="20" height="20" viewBox="0 0 20 20"><path d="M9.500 0l9 3v7c0 5-5 7.500-9 9.500C5 17.500.5 15 .500 10V3z" fill="#1e8fe0"/><path d="M9.500 0v9.500H.5V3z" fill="#42c3f5"/><path d="M9.500 9.500V19.500C5 17.500.5 15 .500 9.500z" fill="#1066b8"/><path d="M14 7l6 13H8z" fill="#ffc412"/><path d="M14 11.500v4.500M14 17v1.700" stroke="#111" stroke-width="1.500"/></svg>
    <span class="kb">FRA</span>
    <svg width="20" height="16" viewBox="0 0 20 16" fill="none" stroke-width="1.600"><path d="M1 6c5-6 13-6 18 0" stroke="#a9b2bd" stroke-width="1.200"/><path d="M3.500 8.500c4-4.300 9-4.300 13 0M6 11.300c2.500-2.700 5.500-2.700 8 0" stroke="#111"/><circle cx="10" cy="13.500" r="1.700" fill="#111"/></svg>
    <svg width="20" height="16" viewBox="0 0 20 16" fill="none" stroke="#111" stroke-width="1.400"><path d="M1 5.500h3L8.500 1.500v13L4 10.500H1zM11 5.500c1.300 1.600 1.300 3.400 0 5"/><path d="M13.500 3c3 3 3 7 0 10M16 1c4 4.500 4 9.500 0 14" stroke="#aab2bc"/></svg>
    <svg width="20" height="14" viewBox="0 0 20 14"><rect x="1" y="1" width="15.500" height="11.500" rx="2.500" fill="none" stroke="#111" stroke-width="1.500"/><path d="M3.200 3.300h6.500v7H3.200zM17.500 4.500c2 0 2.500 1 2.500 2.300s-.5 2.200-2.500 2.200z"/></svg>
    <div class="time"><span>11:58</span><span>02/06/2024</span></div>
    <svg width="17" height="20" viewBox="0 0 17 20"><path d="M8.500 1C5 1 2.300 3.700 2.300 7.300V12L.5 15.500c-.2.500 0 1 .6 1h14.800c.6 0 .8-.5.6-1L14.700 12V7.300C14.700 3.700 12 1 8.500 1zM5.500 17.500h6c-.5 1.500-1.500 2.300-3 2.300s-2.500-.8-3-2.300z" fill="#003f92"/></svg>
  </div>
</footer>
</body>
</html>
```
FILE: styles.css
```css
* { box-sizing: border-box; }
body { margin: 0; width: 1920px; height: 1080px; overflow: hidden; display: flex; flex-direction: column; background: #f7f7f7; font-family: "Open Sans", "Noto Sans", sans-serif; color: #1f1f1f; }
svg { display: block; flex: none; }
p, h1, h2, ul { margin: 0; padding: 0; }
.defs { position: absolute; }

/* Browser tabs */
.tabstrip { height: 40px; flex: none; display: flex; align-items: center; background: #cdcdcd; font-size: 15px; color: #111; padding-left: 10px; }
.profile { width: 98px; height: 34px; border: 1.5px solid #222; border-radius: 17px; display: flex; align-items: center; gap: 9px; padding-left: 4px; letter-spacing: -.4px; }
.workspaces { margin-left: 20px; }
.tabactions { margin-left: 32px; }
.tab { height: 24px; display: flex; align-items: center; border-left: 2px solid #8b8b8b; }
.tab-one { width: 299px; margin-left: 24px; padding-left: 12px; }
.tab-two { width: 299px; padding-left: 13px; }
.faded { opacity: .6; }
.title { white-space: nowrap; overflow: hidden; height: 24px; line-height: 23px; letter-spacing: -.6px; }
.t1 { margin-left: 14px; width: 217px; mask-image: linear-gradient(90deg, #000 88%, transparent); }
.t2 { margin-left: 12px; width: 218px; letter-spacing: -.5px; }
.t3 { margin-left: 13px; width: 217px; letter-spacing: -.42px; mask-image: linear-gradient(90deg, #000 89%, transparent); }
.tab .x { margin-left: 11px; }
.tab-two .x { margin-left: 11px; }
.tab-heart { display: inline-block; vertical-align: -2px; margin: 0 4px 0 2px; }
.active { position: relative; align-self: flex-end; width: 298px; height: 40px; padding-left: 14px; border: 0; border-radius: 10px 10px 0 0; background: #f7f7f7; }
.active::before, .active::after { content: ""; position: absolute; bottom: 0; width: 10px; height: 10px; }
.active::before { left: -10px; background: radial-gradient(circle at 0 0, transparent 10px, #f7f7f7 10.5px); }
.active::after { right: -10px; background: radial-gradient(circle at 100% 0, transparent 10px, #f7f7f7 10.5px); }
.newtab { margin-left: 19px; }
.winctl { margin-left: auto; display: flex; gap: 43.5px; padding-right: 22px; }

/* Address row */
.toolbar { height: 47px; flex: none; display: flex; align-items: flex-start; padding: 5px 0 0 24px; background: #f7f7f7; }
.nav-ic { margin: 8px 33px 0 0; }
.nav-ic + .nav-ic { margin-right: 24px; margin-top: 7px; }
.address { width: 1288px; height: 37px; border-radius: 19px; background: #fff; box-shadow: 0 0 4px rgba(0,0,0,.1); display: flex; align-items: center; padding-left: 23px; }
.url { margin-left: 20px; font-size: 17px; letter-spacing: -.17px; color: #757575; white-space: nowrap; }
.url b { font-weight: 400; color: #000; letter-spacing: -.3px; }
.addr-icons { margin: 0 20px 0 auto; display: flex; gap: 28px; }
.tools { display: flex; align-items: center; height: 37px; gap: 33.1px; padding-left: 25px; }
.tools-sep { width: 1px; height: 25px; background: #c6c6c6; margin: 0 -13px 0 -15px; }
.copilot { margin-left: -7px; }

/* Page frame */
.viewport { position: relative; height: 929px; margin: 0 4px 3px 4px; flex: none; border: 1px solid #e1e3e6; border-radius: 12px; background: #f6f8fc; overflow: hidden; font-family: "Inter", sans-serif; }
.page { display: grid; grid-template: 80px 828px / 320px 1520px 1fr; }
.ghead { grid-column: 1 / -1; display: flex; align-items: center; color: #5f6368; fill: #5f6368; }
.brand { width: 320px; display: flex; align-items: center; padding-left: 30px; }
.glogo { margin-left: 21px; }
.gword { margin-left: 13px; font: 27.5px/32px "Lato", sans-serif; letter-spacing: .4px; -webkit-text-stroke: .3px #5f6368; }
.search { width: 900px; height: 60px; border-radius: 30px; background: #eaf1fb; display: flex; align-items: center; padding: 0 20px 0 15px; fill: #444746; }
.search span { margin: 0 auto 0 10px; font-size: 19.5px; letter-spacing: -.13px; color: #1f1f1f; }
.search svg + svg { margin-left: 25px; }
.ghead-right { margin-left: 463px; display: flex; gap: 25px; align-items: center; }
.me { width: 40px; height: 40px; border-radius: 50%; background: #689f38; color: #fff; font: 500 20px/42px "Inter", sans-serif; text-align: center; }

/* Left navigation */
.side { padding-top: 10px; }
.compose { width: 251px; height: 70px; margin-left: 10px; border-radius: 20px; background: #c2e7ff; display: flex; align-items: center; gap: 20px; padding-left: 20px; font-size: 17px; font-weight: 500; letter-spacing: .02px; color: #001d35; }
.nav { list-style: none; }
.compose + .nav { margin-top: 20px; }
.nav li { height: 40px; display: flex; align-items: center; padding: 0 35px 0 33px; font-size: 17px; letter-spacing: -.35px; color: #30343a; fill: #444746; }
.nav svg { width: 25px; height: 25px; }
.nav span { margin-left: 22px; }
.nav em { margin-left: auto; font-style: normal; font-size: 14px; letter-spacing: -.3px; font-weight: 400; color: #5f6368; }
.nav .strong { font-size: 17.5px; font-weight: 600; color: #202124; letter-spacing: .15px; }
.labels { height: 68px; margin-top: 13px; display: flex; align-items: center; justify-content: space-between; padding: 0 31px 0 32px; font-size: 20px; color: #1f1f1f; fill: #444746; }
.labels + .nav { margin-top: -6px; }

/* Message panel */
.mail { border-radius: 20px; background: #fff; overflow: hidden; }
.actions { height: 60px; display: flex; align-items: center; padding-left: 5px; fill: #444746; }
.actions svg { width: 23px; height: 23px; margin: 0 16px; }
.actions .back { margin: 0 31px 0 16px; }
.actions i { width: 1px; height: 25px; margin: 0 10px 0 9px; background: #e5e5e5; }
.actions .more { margin-left: 11px; }
.count { margin: 0 13.5px 0 659px; font-size: 15px; letter-spacing: -.45px; color: #5f6368; }
.actions .count + svg { margin: 0 13px; }
.actions .count + svg + svg { margin: 0 13px; }
.actions .lang { width: 25px; height: 20px; margin: 0 0 0 10px; }
.actions .caret { width: 20px; height: 20px; margin: -2px 0 0 2px; }
.scroll { position: relative; height: 768px; }
.subject { height: 84px; padding: 0 39px 0 90px; display: flex; align-items: center; fill: #444746; }
.subject h1 { font-size: 26px; font-weight: 400; letter-spacing: .06px; white-space: nowrap; width: 322px; }
.chip { height: 22px; margin: 2px 0 0 13px; padding: 0 6px; display: flex; align-items: center; border-radius: 4px; background: #ddd; color: #5f6368; font-size: 14.5px; white-space: nowrap; width: 152px; justify-content: space-between; }
.print { margin: 0 20px 0 auto; }
.subject > svg:nth-last-child(-n+2) { position: relative; top: 1px; }
.from { display: flex; height: 72px; padding: 12px 40px 0 20px; }
.who { margin-left: 20px; }
.who p { height: 25px; line-height: 25px; white-space: nowrap; font-size: 14.5px; letter-spacing: -.12px; color: #5f6368; margin-top: -1px; }
.who b { font-size: 17.5px; font-weight: 600; letter-spacing: .2px; color: #1f1f1f; }
.who .to { display: flex; align-items: center; gap: 2px; fill: #5f6368; margin-top: 0; letter-spacing: 0; }
.date { margin-left: auto; font-size: 14px; line-height: 24px; letter-spacing: -.1px; color: #5f6368; }
.from-ic { display: flex; gap: 26px; margin: 1px 0 0 26px; fill: #444746; color: #444746; }
.from-ic svg { width: 24px; height: 24px; }
.from-ic .dim { fill: #b3b3b3; }
.hollow { fill: none; }
.letter { margin: 0 40px 0 90px; height: 612px; background: #e8ecef; padding: 0 245px; overflow: hidden; }
.sheet { background: #fff; height: 612px; padding: 150px 0 0 19px; font-family: "Liberation Sans", Arial, sans-serif; white-space: nowrap; color: #6c757d; }
.missing { margin-left: 300px; }
.sheet h2 { margin: 218px 0 4px; height: 62px; font-size: 43.75px; line-height: 62px; font-weight: 700; color: #212529; }
.sheet p { font-size: 18px; line-height: 26px; letter-spacing: -.225px; margin-bottom: 20.5px; }
.thumb { position: absolute; right: 0; top: 0; width: 14px; height: 301px; background: #cdcdcd; border: 1px solid #bdbdbd; border-right: 0; }

/* Right rail */
.apps { display: flex; flex-direction: column; align-items: center; padding: 23px 0 0 1px; gap: 46px; }
.apps i { width: 25px; height: 1px; background: #d7d9dc; margin: -3px 0; }
.cal { font: 700 10px "Roboto", sans-serif; fill: #4285f4; }
.float { position: absolute; display: flex; align-items: center; justify-content: center; background: #fafafa; box-shadow: 0 2px 14px rgba(0,0,0,.17); }
.translate { left: 1859px; top: 802px; width: 45px; height: 45px; border-radius: 50%; }
.brain { left: 1850px; top: 859px; width: 62px; height: 56px; border-radius: 28px 0 0 28px; padding-left: 4px; }

/* Windows taskbar */
.taskbar { height: 60px; margin-top: 1px; flex: none; border-top: 1px solid #aab4bd; display: flex; align-items: center; background: linear-gradient(90deg, #e2eef7 0, #e2eef8 350px, #d5e2fa 460px, #d6ddf5 640px, #d3e2fa 830px, #d8dcf1 930px, #d4def7 1350px, #dce6f5 1450px, #e2eef9 1600px, #e1edf8); }
.news { position: relative; width: 463px; padding-left: 25px; display: flex; align-items: center; }
.badge { position: absolute; left: 39px; top: -3px; width: 20px; height: 20px; border-radius: 50%; background: #c42b1c; color: #fff; font-size: 13px; line-height: 20px; text-align: center; }
.news-text { margin-left: 9px; font-family: "DejaVu Sans", sans-serif; }
.news-text p { height: 20px; line-height: 20px; font-size: 14.4px; text-align: left; white-space: nowrap; }
.news-text .n2 { font-size: 15px; color: #5c6066; }
.tsearch { width: 274px; height: 39px; margin-left: 18px; border: 1px solid #bfc9de; border-radius: 20px; background: #f2f5fd; display: flex; align-items: center; padding: 0 9px 0 13px; font-size: 17px; letter-spacing: -.5px; color: #5b5b5b; }
.tsearch span { margin: 0 auto 0 12px; }
.pins { margin-left: 6px; display: flex; }
.pin { position: relative; width: 48px; height: 48px; margin-right: 7px; display: flex; align-items: center; justify-content: center; }
.current { background: #ebf0fb; border-radius: 5px; box-shadow: 0 0 0 1px #d5dcec; }
.pin b { position: absolute; bottom: 0; left: 20px; width: 8px; height: 4px; border-radius: 2px; background: #7e838b; }
.pin .blue { left: 14px; width: 20px; background: #0078d4; }
.pin .red { left: 9px; width: 30px; background: #c42b1c; }
.pre { font: 800 7.5px "Open Sans", sans-serif; }
.ij { font: 700 11px "Liberation Mono", monospace; fill: #fff; }
.office { font: 700 12px "Open Sans", sans-serif; fill: #fff; }
.g-letter { font: 700 8px "Roboto", sans-serif; fill: #fff; }
.tray { margin: -2px 0 0 auto; padding-right: 26px; display: flex; align-items: center; gap: 20px; font-size: 15px; letter-spacing: -.3px; color: #111; }
.tray > svg:first-child { margin-right: 3px; }
.kb { margin: 0 4px 0 5px; width: 26px; letter-spacing: -.5px; }
.kb ~ svg { margin-right: -10px; }
.time { width: 90px; margin: -3px -9px 0 -2px; display: flex; flex-direction: column; text-align: right; line-height: 20px; }
.kb ~ .time ~ svg { margin-right: 0; }
```
